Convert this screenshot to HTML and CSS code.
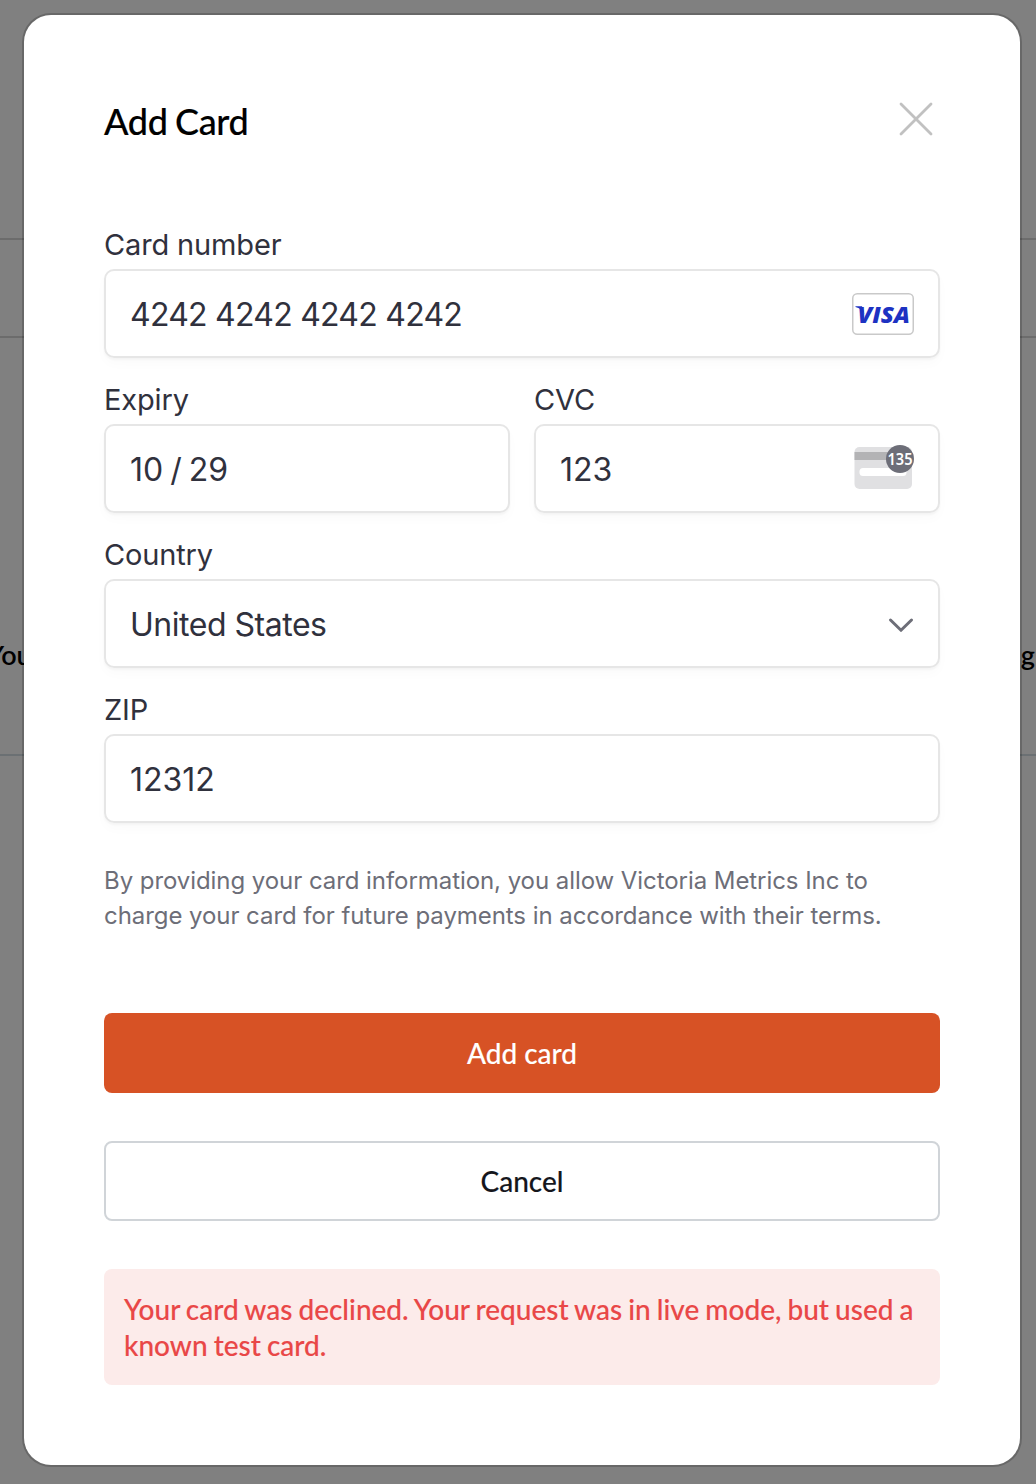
FILE: index.html
```html
<!DOCTYPE html>
<html lang="en">
<head>
<meta charset="utf-8">
<title>Add Card</title>
<link rel="stylesheet" href="styles.css">
</head>
<body>
<div class="page">
  <div class="page-head"></div>
  <div class="page-tabs"></div>
  <div class="page-row"><span class="page-start">You</span><span class="page-end">g</span></div>
</div>
<main class="dialog">
  <header class="dialog-head">
    <h1 class="title">Add Card</h1>
    <svg class="close" viewBox="0 0 36 36"><path d="M3 3L33 33M33 3L3 33" fill="none" stroke="#c1c1c1" stroke-width="2.8" stroke-linecap="round"/></svg>
  </header>
  <form class="fields">
    <div class="field">
      <div class="label">Card number</div>
      <div class="input"><span class="value number">4242 4242 4242 4242</span>
        <svg class="visa" viewBox="0 0 62 42"><rect x=".75" y=".75" width="60.5" height="40.5" rx="4.5" fill="#fff" stroke="#c9c9c9" stroke-width="1.5"/><path d="M3.500 13.300H10L12.500 21C10.500 17 7.500 15 3.500 14.100Z" fill="#1d32c2"/><text class="visa-text" x="5.5" y="29.800" textLength="52.500" lengthAdjust="spacingAndGlyphs">VISA</text></svg>
      </div>
    </div>
    <div class="pair">
      <div class="field">
        <div class="label">Expiry</div>
        <div class="input"><span class="value expiry">10 / 29</span></div>
      </div>
      <div class="field">
        <div class="label">CVC</div>
        <div class="input"><span class="value">123</span>
          <svg class="cvc" viewBox="0 0 62 46"><rect x="2.500" y="3" width="57.500" height="42" rx="5" fill="#e0e0e2"/><path d="M2.500 8H60V16H2.500Z" fill="#b3b3b5"/><rect x="7.500" y="24" width="47" height="8" rx="3.500" fill="#fff"/><circle cx="48" cy="15" r="14" fill="#6d6e78"/><text class="cvc-text" x="35.500" y="21" textLength="25" lengthAdjust="spacingAndGlyphs">135</text></svg>
        </div>
      </div>
    </div>
    <div class="field">
      <div class="label">Country</div>
      <div class="input"><span class="value country">United States</span>
        <svg class="chevron" viewBox="0 0 26 16"><path d="M2.500 3L13 13.300L23.500 3" fill="none" stroke="#6d6e78" stroke-width="3" stroke-linecap="round" stroke-linejoin="round"/></svg>
      </div>
    </div>
    <div class="field">
      <div class="label">ZIP</div>
      <div class="input"><span class="value">12312</span></div>
    </div>
  </form>
  <p class="terms">By providing your card information, you allow Victoria Metrics Inc to<br>charge your card for future payments in accordance with their terms.</p>
  <button class="button primary">Add card</button>
  <button class="button secondary">Cancel</button>
  <div class="error">Your card was declined. Your request was in live mode, but used a<br>known test card.</div>
</main>
</body>
</html>
```
FILE: styles.css
```css
* { box-sizing: border-box; }
body { margin: 0; height: 1484px; overflow: hidden; background: #808080; font-family: Lato, sans-serif; }
.page { width: 1036px; overflow: hidden; }
.page-head { height: 240px; border-bottom: 2px solid #6c6c6c; }
.page-tabs { height: 98px; border-bottom: 2px solid #6c6c6c; }
.page-row { height: 418px; border-bottom: 2px solid #6b7073; padding-top: 300px; display: flex; justify-content: space-between; font-size: 27px; font-weight: 600; line-height: 34px; color: #000; }
.page-start { margin-left: -13px; }
.page-end { margin-right: 1px; }
.dialog { position: absolute; left: 24px; top: 15px; width: 996px; height: 1450px; padding: 80px; border-radius: 27px; background: #fff; box-shadow: 0 0 0 2px rgba(0,0,0,.19); display: flex; flex-direction: column; }
.dialog-head { display: flex; justify-content: space-between; height: 131px; }
.title { margin: 4px 0 0; font-size: 36px; font-weight: 500; line-height: 44px; letter-spacing: -.3px; word-spacing: -1.5px; color: #000; -webkit-text-stroke: .15px #000; }
.close { width: 36px; height: 36px; margin: 6px 6px 0 0; }
.fields { display: flex; flex-direction: column; font-family: Inter, sans-serif; color: #30313d; }
.field { height: 155px; flex: 1 0 155px; }
.pair { display: flex; gap: 24px; height: 155px; }
.pair .field { flex: 1; }
.label { height: 43px; line-height: 38px; font-size: 29px; letter-spacing: -.15px; white-space: nowrap; }
.input { height: 89px; border: 2px solid #e6e6e6; border-radius: 10px; padding: 0 24px; display: flex; align-items: center; justify-content: space-between; font-size: 32px; white-space: nowrap; box-shadow: 0 2px 2px rgba(0,0,0,.03), 0 6px 12px rgba(0,0,0,.02); }
.value { padding-top: 1px; }
.number { letter-spacing: -.76px; }
.expiry { word-spacing: -2px; }
.country { letter-spacing: -.48px; }
.visa { width: 62px; height: 42px; }
.visa-text { font: italic 800 23px "Open Sans", sans-serif; fill: #1d32c2; }
.cvc { width: 62px; height: 46px; margin-bottom: 4px; }
.cvc-text { font: 600 16.500px "Noto Sans", sans-serif; fill: #fff; }
.chevron { width: 26px; height: 16px; margin-top: 3px; }
.terms { margin: 17px 0 0; height: 150px; font: 24px/35px Inter, sans-serif; letter-spacing: -.063px; color: #6d6e78; white-space: nowrap; }
.button { height: 80px; flex: none; border: 0; border-radius: 8px; font: 500 28px/36px Lato, sans-serif; padding: 0; -webkit-text-stroke: .12px currentColor; }
.primary { background: #d75225; color: #fff; }
.secondary { margin-top: 48px; background: #fff; border: 2px solid #d0d4d8; color: #15161c; }
.error { margin-top: 48px; height: 116px; padding: 22px 20px; border-radius: 8px; background: #fcebea; color: #e94747; font-size: 28px; font-weight: 500; line-height: 36px; word-spacing: -1px; white-space: nowrap; -webkit-text-stroke: .12px currentColor; }
```
